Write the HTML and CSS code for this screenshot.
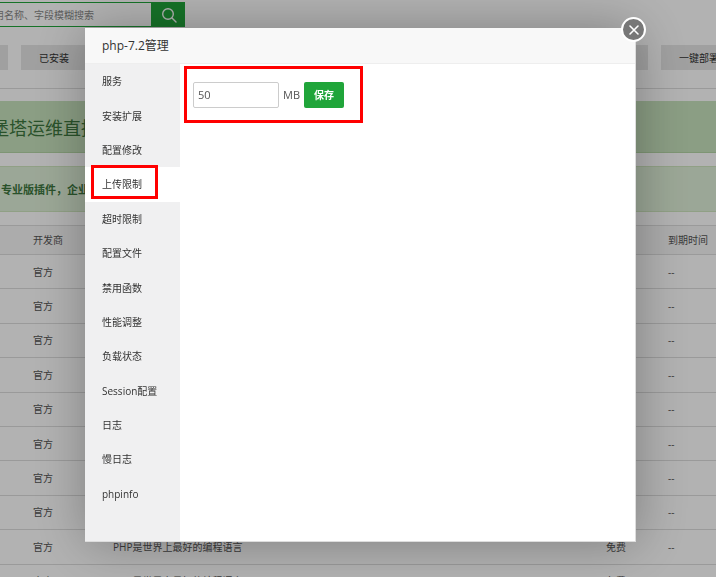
FILE: index.html
```
<!DOCTYPE html>
<html lang="zh-CN">
<head>
  <meta charset="UTF-8" />
  <meta name="viewport" content="width=device-width, initial-scale=1.0" />
  <title>php-7.2管理</title>
  <link rel="stylesheet" href="styles.css">
</head>
<body>
  <div class="page">
    <form class="search">
      <input type="text" aria-label="搜索" placeholder="用名称、字段模糊搜索" />
      <button type="button" aria-label="搜索">
        <svg width="16" height="16" viewBox="0 0 16 16" fill="none" stroke="currentColor" stroke-width="1.4">
          <circle cx="7" cy="7" r="5.3" />
          <path d="M11 11l4 4" stroke-linecap="round" />
        </svg>
      </button>
    </form>
    <div class="types">
      <div class="types-group">
        <button type="button" aria-label="全部"></button>
        <button type="button">已安装</button>
      </div>
      <div class="types-group">
        <button type="button" aria-label="其他"></button>
        <button type="button">一键部署</button>
      </div>
    </div>
    <div class="banner">堡塔运维直播</div>
    <div class="notice">专业版插件，企业版</div>
    <table class="soft-table">
      <thead>
        <tr><th class="col-dev">开发商</th><th class="col-desc"></th><th class="col-price"></th><th class="col-date">到期时间</th></tr>
      </thead>
      <tbody>
        <tr><td>官方</td><td></td><td></td><td>--</td></tr>
        <tr><td>官方</td><td></td><td></td><td>--</td></tr>
        <tr><td>官方</td><td></td><td></td><td>--</td></tr>
        <tr><td>官方</td><td></td><td></td><td>--</td></tr>
        <tr><td>官方</td><td></td><td></td><td>--</td></tr>
        <tr><td>官方</td><td></td><td></td><td>--</td></tr>
        <tr><td>官方</td><td></td><td></td><td>--</td></tr>
        <tr><td>官方</td><td></td><td></td><td>--</td></tr>
        <tr><td>官方</td><td>PHP是世界上最好的编程语言</td><td>免费</td><td>--</td></tr>
        <tr><td>官方</td><td>PHP是世界上最好的编程语言</td><td>免费</td><td>--</td></tr>
      </tbody>
    </table>
  </div>

  <div class="shade">
    <div class="modal" role="dialog" aria-labelledby="modal-title">
      <div class="modal-title" id="modal-title">php-7.2管理</div>
      <button type="button" class="modal-close" aria-label="关闭">
        <svg width="12" height="12" viewBox="0 0 12 12" fill="none" stroke="currentColor" stroke-width="1.6" stroke-linecap="round">
          <path d="M2 2l8 8M10 2l-8 8" />
        </svg>
      </button>
      <div class="modal-body">
        <nav class="menu">
          <a href="#">服务</a>
          <a href="#">安装扩展</a>
          <a href="#">配置修改</a>
          <a href="#" class="active">上传限制</a>
          <a href="#">超时限制</a>
          <a href="#">配置文件</a>
          <a href="#">禁用函数</a>
          <a href="#">性能调整</a>
          <a href="#">负载状态</a>
          <a href="#">Session配置</a>
          <a href="#">日志</a>
          <a href="#">慢日志</a>
          <a href="#">phpinfo</a>
        </nav>
        <div class="content">
          <form class="limit">
            <input type="text" id="size" value="50" />
            <label for="size">MB</label>
            <button type="button">保存</button>
          </form>
        </div>
      </div>
    </div>
  </div>
</body>
</html>
```

FILE: styles.css
```
* {
  box-sizing: border-box;
}
body {
  margin: 0;
  height: 100vh;
  overflow: hidden;
  background: #fff;
  color: #555;
  font-family: "Open Sans", "Noto Sans CJK SC", sans-serif;
  font-size: 10px;
  line-height: 16px;
}
input, button {
  font: inherit;
}
a {
  color: inherit;
  text-decoration: none;
}
.page {
  margin: 0 -21px 0 -20px;
  padding-top: 2px;
}
.search {
  display: flex;
  width: 205px;
  height: 25px;
}
.search input {
  flex: 1;
  min-width: 0;
  padding: 0 13px;
  border: 1px solid #20a53a;
}
.search input::placeholder {
  color: #888;
}
.search button {
  display: flex;
  align-items: center;
  justify-content: center;
  width: 33px;
  padding: 0;
  border: 0;
  background: #20a53a;
  color: #fff;
}
.types {
  display: flex;
  justify-content: space-between;
  padding: 18px 0;
  border-bottom: 1px solid #ddd;
}
.types-group {
  display: flex;
  gap: 13px;
}
.types button {
  height: 25px;
  padding: 0 18px;
  border: 0;
  background: #e6e6e6;
  color: #333;
}
.types button:empty {
  width: 28px;
  padding: 0;
}
.banner {
  height: 52px;
  margin-top: 12px;
  padding-left: 11px;
  background: #c7e2bd;
  border-bottom: 1px solid #b5d6a6;
  color: #3c763d;
  font-size: 18px;
  line-height: 54px;
}
.notice {
  height: 46px;
  margin-top: 13px;
  padding-left: 20px;
  background: #dff0d8;
  border: 1px solid #cfe6bf;
  color: #3c763d;
  font-size: 11px;
  font-weight: bold;
  line-height: 46px;
}
.soft-table {
  width: 100%;
  height: 374px;
  margin-top: 13px;
  border-collapse: collapse;
  table-layout: fixed;
  border-top: 1px solid #ddd;
}
.soft-table th,
.soft-table td {
  padding: 0;
  border-bottom: 1px solid #ddd;
  text-align: left;
  font-weight: normal;
}
.soft-table th {
  height: 29px;
  background: #f6f6f6;
}
.soft-table th:first-child,
.soft-table td:first-child {
  padding-left: 53px;
}
.col-dev {
  width: 133px;
}
.col-price {
  width: 62px;
}
.col-date {
  width: 69px;
}
.shade {
  position: fixed;
  inset: 0;
  display: flex;
  padding: 28px 80px 35px 85px;
  background: rgba(0, 0, 0, 0.3);
}
.modal {
  position: relative;
  display: flex;
  flex-direction: column;
  flex: 1;
  background: #fff;
  box-shadow: 1px 1px 50px rgba(0, 0, 0, 0.3);
  border-right: 1px solid #ddd;
  border-bottom: 1px solid #ddd;
}
.modal-title {
  height: 36px;
  padding: 0 17px;
  border-bottom: 1px solid #eee;
  background: #f8f8f8;
  color: #333;
  font-size: 12px;
  line-height: 36px;
}
.modal-close {
  position: absolute;
  top: -11px;
  right: -11px;
  display: flex;
  align-items: center;
  justify-content: center;
  width: 25px;
  height: 25px;
  padding: 0;
  border: 2px solid #fff;
  border-radius: 50%;
  background: #777;
  color: #fff;
}
.modal-body {
  display: flex;
  flex: 1;
}
.menu {
  display: flex;
  flex-direction: column;
  width: 95px;
  padding-bottom: 30px;
  background: #f0f0f1;
  color: #333;
}
.menu a {
  position: relative;
  display: flex;
  flex: 1;
  align-items: center;
  padding-left: 17px;
}
.menu .active {
  background: #fff;
}
.menu .active::after {
  content: "";
  position: absolute;
  inset: -2px 22px 3px 6px;
  border: 3px solid #f00;
}
.content {
  flex: 1;
  padding: 2px 4px;
}
.limit {
  display: flex;
  align-items: center;
  gap: 4px;
  width: 179px;
  height: 57px;
  padding: 0 6px;
  border: 3px solid #f00;
  font-size: 11px;
}
.limit input {
  width: 86px;
  height: 26px;
  padding: 0 4px;
  border: 1px solid #ccc;
  border-radius: 2px;
  color: #555;
}
.limit button {
  width: 40px;
  height: 26px;
  padding: 0;
  border: 0;
  border-radius: 2px;
  background: #20a53a;
  color: #fff;
  font-size: 10px;
  font-weight: bold;
}
```
